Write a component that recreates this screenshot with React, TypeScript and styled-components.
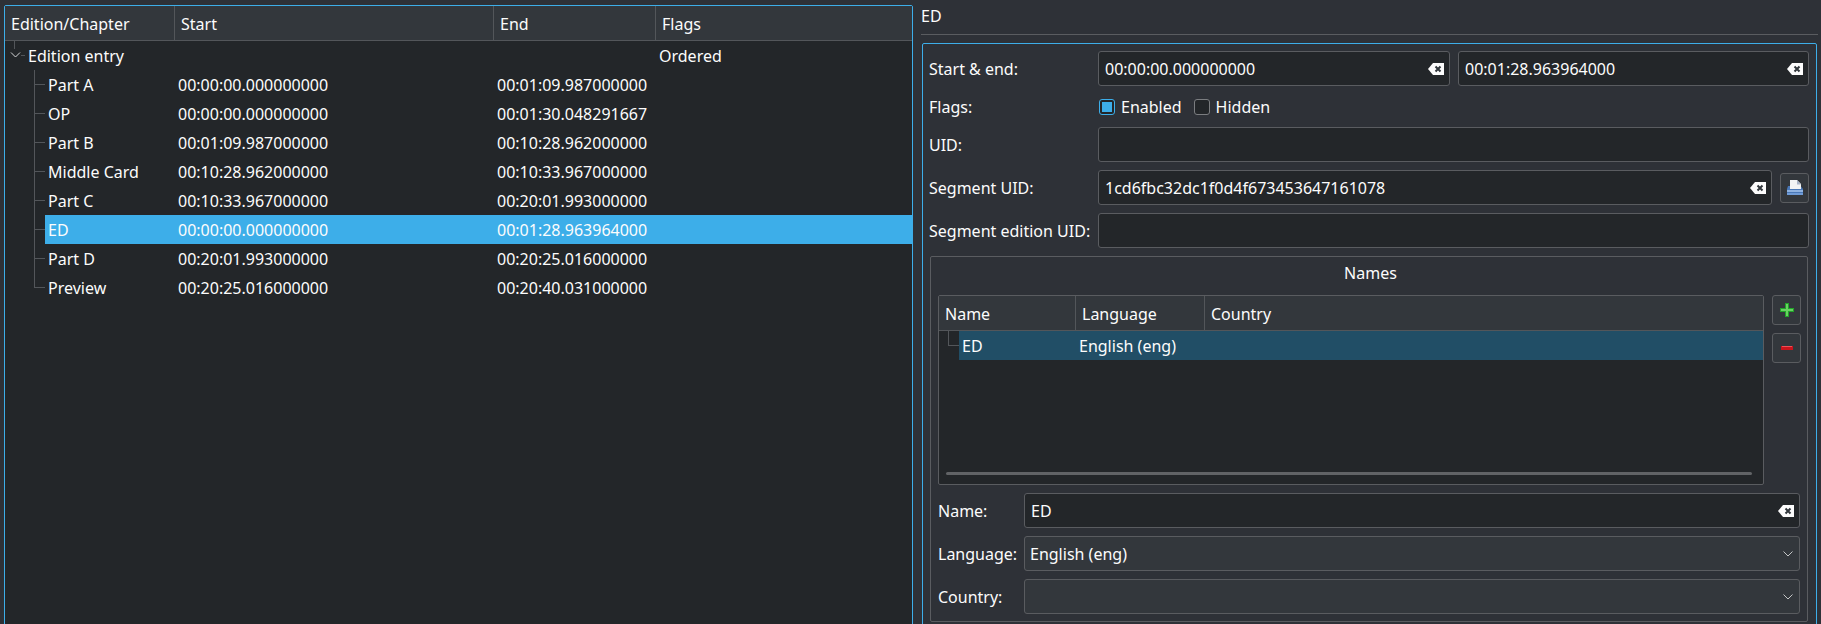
import { FC } from 'react';
import styled, { createGlobalStyle } from 'styled-components';

const GlobalStyle = createGlobalStyle`
  html, body {
    margin: 0;
    height: 100%;
    overflow: hidden;
    background: #2e3137;
  }
  * {
    box-sizing: border-box;
  }
`;

const Window = styled.div`
  width: 1821px;
  height: 624px;
  display: grid;
  grid-template-columns: 909px 1fr;
  column-gap: 8px;
  padding: 5px 3px 0 4px;
  overflow: hidden;
  color: #fcfcfc;
  font-family: 'Noto Sans', sans-serif;
  font-size: 16px;
  background: #2e3137;
`;

const TreePanel = styled.div`
  height: 640px;
  background: #232629;
  border: 1px solid #3daee9;
  border-radius: 2px;
`;

const HeaderRow = styled.div<{ $columns: string }>`
  display: grid;
  grid-template-columns: ${(p) => p.$columns};
  height: 35px;
  background: #33373c;
  border-bottom: 1px solid #53565a;
`;

const HeaderCell = styled.div`
  display: flex;
  align-items: center;
  padding: 2px 0 0 6px;
  border-right: 1px solid #53565a;
  &:last-child {
    border-right: none;
  }
`;

const TreeRow = styled.div`
  display: grid;
  grid-template-columns: 170px 319px 162px 1fr;
  height: 29px;
`;

const NameCell = styled.div`
  display: flex;
  min-width: 0;
`;

const Cell = styled.div<{ $selected?: boolean }>`
  display: flex;
  align-items: center;
  padding-left: 3px;
  background: ${(p) => (p.$selected ? '#3daee9' : 'transparent')};
`;

const NameText = styled(Cell)`
  flex: 1;
`;

const ExpanderGutter = styled.div`
  flex: 0 0 20px;
  svg {
    display: block;
  }
`;

const BranchGutter = styled.div<{ $last?: boolean; $width: number; $line: number }>`
  flex: 0 0 ${(p) => p.$width}px;
  background-image: linear-gradient(#53565a, #53565a), linear-gradient(#53565a, #53565a);
  background-repeat: no-repeat;
  background-size: 1px ${(p) => (p.$last ? '50%' : '100%')}, ${(p) => p.$width - p.$line}px 1px;
  background-position: ${(p) => p.$line}px 0, ${(p) => p.$line}px 50%;
`;

const EditorPanel = styled.div`
  display: flex;
  flex-direction: column;
  min-width: 0;
`;

const Title = styled.div`
  height: 22px;
  display: flex;
  align-items: center;
`;

const TitleRule = styled.div`
  height: 1px;
  margin-top: 7px;
  margin-bottom: 8px;
  background: #5a5c60;
`;

const EditorBox = styled.div`
  display: flex;
  flex-direction: column;
  gap: 8px;
  height: 640px;
  margin: 0 1px;
  padding: 7px 7px 0 6px;
  border: 1px solid #3daee9;
  border-radius: 2px;
`;

const FormRow = styled.div`
  display: grid;
  grid-template-columns: 169px 1fr;
  align-items: center;
`;

const FieldLabel = styled.div`
  padding-top: 1px;
  white-space: nowrap;
`;

const FieldPair = styled.div`
  display: grid;
  grid-template-columns: 352px 1fr;
  column-gap: 8px;
`;

const FieldWithButton = styled.div`
  display: flex;
  align-items: center;
  gap: 8px;
`;

const TextField = styled.div`
  flex: 1;
  display: flex;
  align-items: center;
  justify-content: space-between;
  height: 35px;
  padding: 0 5px 0 6px;
  background: #232629;
  border: 1px solid #5a5c60;
  border-radius: 3px;
`;

const Flags = styled.div`
  height: 25px;
  display: flex;
  align-items: center;
`;

const CheckGroup = styled.label`
  display: flex;
  align-items: center;
  gap: 6px;
  margin-left: 1px;
  margin-right: 11px;
`;

const CheckBox = styled.span<{ $checked?: boolean }>`
  display: block;
  width: 16px;
  height: 16px;
  padding: 2px;
  border: 1px solid ${(p) => (p.$checked ? '#3daee9' : '#7b7d80')};
  border-radius: 3px;
  background: #232629;
  &::after {
    content: '';
    display: ${(p) => (p.$checked ? 'block' : 'none')};
    height: 100%;
    background: #3daee9;
  }
`;

const IconButton = styled.div`
  flex: none;
  width: 29px;
  height: 30px;
  display: flex;
  align-items: center;
  justify-content: center;
  background: #33373c;
  border: 1px solid #5a5c60;
  border-radius: 3px;
`;

const NamesBox = styled.div`
  display: flex;
  flex-direction: column;
  height: 366px;
  margin: 0 1px;
  padding: 0 7px 7px;
  border: 1px solid #5a5c60;
  border-radius: 2px;
`;

const NamesTitle = styled.div`
  height: 38px;
  padding: 0 0 6px 3px;
  display: flex;
  align-items: center;
  justify-content: center;
`;

const NamesBody = styled.div`
  display: grid;
  grid-template-columns: 826px 29px;
  column-gap: 8px;
  height: 190px;
`;

const NamesTable = styled.div`
  display: flex;
  flex-direction: column;
  background: #232629;
  border: 1px solid #5a5c60;
  border-radius: 2px;
`;

const NamesRow = styled.div`
  display: flex;
  height: 29px;
  flex: none;
`;

const NamesCell = styled.div<{ $width?: number }>`
  display: flex;
  align-items: center;
  flex: ${(p) => (p.$width ? `0 0 ${p.$width}px` : '1')};
  padding-left: ${(p) => (p.$width ? 3 : 4)}px;
  background: #214e66;
`;

const TableSpace = styled.div`
  flex: 1;
`;

const ScrollBar = styled.div`
  flex: none;
  height: 3px;
  margin: 0 11px 9px 7px;
  background: #616366;
  border-radius: 2px;
`;

const SideButtons = styled.div`
  display: flex;
  flex-direction: column;
  gap: 8px;
`;

const NameForm = styled.div`
  display: flex;
  flex-direction: column;
  gap: 8px;
  margin-top: 8px;
`;

const NameRow = styled.div`
  display: grid;
  grid-template-columns: 86px 1fr;
  align-items: center;
`;

const SelectBox = styled.div`
  display: flex;
  align-items: center;
  justify-content: space-between;
  height: 35px;
  padding: 0 5px;
  background: #33373c;
  border: 1px solid #5a5c60;
  border-radius: 3px;
`;

const ClearIcon: FC = () => (
  <svg width='16' height='12' viewBox='0 0 16 12'>
    <path d='M5 0H16V12H5L0 6Z' fill='#fcfcfc' />
    <path d='M7.5 3.5L12.5 8.5M12.5 3.5L7.5 8.5' stroke='#31363b' strokeWidth='2' />
  </svg>
);

const Chevron: FC = () => (
  <svg width='12' height='8' viewBox='0 0 12 8'>
    <path d='M1.5 1.5L6 6L10.5 1.5' fill='none' stroke='#c4c5c6' strokeWidth='1' />
  </svg>
);

const ExpanderIcon: FC = () => (
  <svg width='20' height='29' viewBox='0 0 20 29'>
    <path d='M9.5 0V8M16 14.5H20' stroke='#53565a' fill='none' />
    <path d='M6 11.5L10.5 16L15 11.5' stroke='#d5d6d7' fill='none' />
  </svg>
);

const ExportIcon: FC = () => (
  <svg width='16' height='15' viewBox='0 0 16 15'>
    <path d='M3 0H10L14 4V9H3Z' fill='#f2f3f5' />
    <path d='M10 0L14 4.5H10Z' fill='#a9b4c8' />
    <path d='M1 6H3V9H14V6.5L16 9V15H0V9Z' fill='#4a78b8' />
    <rect x='0' y='10' width='16' height='2' fill='#8fb2e0' />
    <rect x='0' y='13' width='16' height='2' fill='#6f9bd6' />
  </svg>
);

const PlusIcon: FC = () => (
  <svg width='14' height='14' viewBox='0 0 14 14'>
    <path d='M5 0H9V5H14V9H9V14H5V9H0V5H5Z' fill='#22a32a' />
    <path d='M6 1H8V6H13V8H8V13H6V8H1V6H6Z' fill='#69d262' />
  </svg>
);

const MinusIcon: FC = () => (
  <svg width='12' height='4' viewBox='0 0 12 4'>
    <rect width='12' height='4' fill='#c9141c' />
    <rect x='1' y='0' width='10' height='1' fill='#ee5058' />
  </svg>
);

type Chapter = { name: string; start: string; end: string };

const chapters: Chapter[] = [
  { name: 'Part A', start: '00:00:00.000000000', end: '00:01:09.987000000' },
  { name: 'OP', start: '00:00:00.000000000', end: '00:01:30.048291667' },
  { name: 'Part B', start: '00:01:09.987000000', end: '00:10:28.962000000' },
  { name: 'Middle Card', start: '00:10:28.962000000', end: '00:10:33.967000000' },
  { name: 'Part C', start: '00:10:33.967000000', end: '00:20:01.993000000' },
  { name: 'ED', start: '00:00:00.000000000', end: '00:01:28.963964000' },
  { name: 'Part D', start: '00:20:01.993000000', end: '00:20:25.016000000' },
  { name: 'Preview', start: '00:20:25.016000000', end: '00:20:40.031000000' },
];

const App: FC = () => {
  return (
    <Window>
      <GlobalStyle />
      <TreePanel>
        <HeaderRow $columns='170px 319px 162px 1fr'>
          <HeaderCell>Edition/Chapter</HeaderCell>
          <HeaderCell>Start</HeaderCell>
          <HeaderCell>End</HeaderCell>
          <HeaderCell>Flags</HeaderCell>
        </HeaderRow>
        <TreeRow>
          <NameCell>
            <ExpanderGutter>
              <ExpanderIcon />
            </ExpanderGutter>
            <NameText>Edition entry</NameText>
          </NameCell>
          <Cell />
          <Cell />
          <Cell>Ordered</Cell>
        </TreeRow>
        {chapters.map((c, i) => {
          const selected = c.name === 'ED';
          return (
            <TreeRow key={c.name}>
              <NameCell>
                <BranchGutter $width={40} $line={29} $last={i === chapters.length - 1} />
                <NameText $selected={selected}>{c.name}</NameText>
              </NameCell>
              <Cell $selected={selected}>{c.start}</Cell>
              <Cell $selected={selected}>{c.end}</Cell>
              <Cell $selected={selected} />
            </TreeRow>
          );
        })}
      </TreePanel>
      <EditorPanel>
        <Title>ED</Title>
        <TitleRule />
        <EditorBox>
          <FormRow>
            <FieldLabel>Start &amp; end:</FieldLabel>
            <FieldPair>
              <TextField>
                00:00:00.000000000
                <ClearIcon />
              </TextField>
              <TextField>
                00:01:28.963964000
                <ClearIcon />
              </TextField>
            </FieldPair>
          </FormRow>
          <FormRow>
            <FieldLabel>Flags:</FieldLabel>
            <Flags>
              <CheckGroup>
                <CheckBox $checked />
                Enabled
              </CheckGroup>
              <CheckGroup>
                <CheckBox />
                Hidden
              </CheckGroup>
            </Flags>
          </FormRow>
          <FormRow>
            <FieldLabel>UID:</FieldLabel>
            <TextField />
          </FormRow>
          <FormRow>
            <FieldLabel>Segment UID:</FieldLabel>
            <FieldWithButton>
              <TextField>
                1cd6fbc32dc1f0d4f673453647161078
                <ClearIcon />
              </TextField>
              <IconButton>
                <ExportIcon />
              </IconButton>
            </FieldWithButton>
          </FormRow>
          <FormRow>
            <FieldLabel>Segment edition UID:</FieldLabel>
            <TextField />
          </FormRow>
          <NamesBox>
            <NamesTitle>Names</NamesTitle>
            <NamesBody>
              <NamesTable>
                <HeaderRow $columns='137px 129px 1fr'>
                  <HeaderCell>Name</HeaderCell>
                  <HeaderCell>Language</HeaderCell>
                  <HeaderCell>Country</HeaderCell>
                </HeaderRow>
                <NamesRow>
                  <BranchGutter $width={20} $line={9} $last />
                  <NamesCell $width={116}>ED</NamesCell>
                  <NamesCell>English (eng)</NamesCell>
                </NamesRow>
                <TableSpace />
                <ScrollBar />
              </NamesTable>
              <SideButtons>
                <IconButton>
                  <PlusIcon />
                </IconButton>
                <IconButton>
                  <MinusIcon />
                </IconButton>
              </SideButtons>
            </NamesBody>
            <NameForm>
              <NameRow>
                <FieldLabel>Name:</FieldLabel>
                <TextField>
                  ED
                  <ClearIcon />
                </TextField>
              </NameRow>
              <NameRow>
                <FieldLabel>Language:</FieldLabel>
                <SelectBox>
                  English (eng)
                  <Chevron />
                </SelectBox>
              </NameRow>
              <NameRow>
                <FieldLabel>Country:</FieldLabel>
                <SelectBox>
                  <span />
                  <Chevron />
                </SelectBox>
              </NameRow>
            </NameForm>
          </NamesBox>
        </EditorBox>
      </EditorPanel>
    </Window>
  );
};

export default App;
